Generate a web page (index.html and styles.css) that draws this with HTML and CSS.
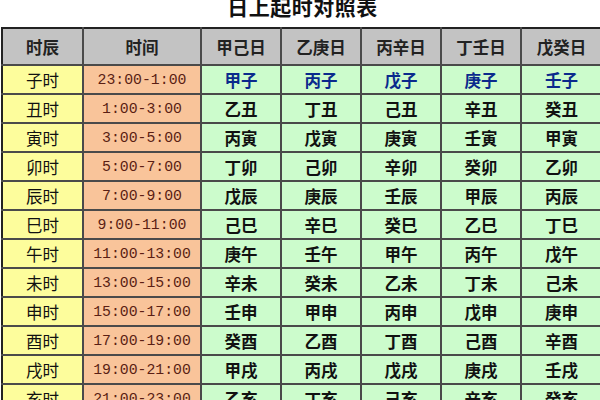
FILE: index.html
```html
<!DOCTYPE html>
<html>
<head>
<meta charset="utf-8">
<link rel="stylesheet" href="styles.css">
</head>
<body>
<div class="page">
  <div class="title">日上起时对照表</div>
  <table class="chart">
    <colgroup>
      <col class="c1"><col class="c2"><col class="c3"><col class="c3"><col class="c3"><col class="c3"><col class="c7">
    </colgroup>
    <thead>
      <tr><th>时辰</th><th>时间</th><th>甲己日</th><th>乙庚日</th><th>丙辛日</th><th>丁壬日</th><th>戊癸日</th></tr>
    </thead>
    <tbody>
      <tr class="first"><td class="hr">子时</td><td class="tm">23:00-1:00</td><td>甲子</td><td>丙子</td><td>戊子</td><td>庚子</td><td>壬子</td></tr>
      <tr><td class="hr">丑时</td><td class="tm">1:00-3:00</td><td>乙丑</td><td>丁丑</td><td>己丑</td><td>辛丑</td><td>癸丑</td></tr>
      <tr><td class="hr">寅时</td><td class="tm">3:00-5:00</td><td>丙寅</td><td>戊寅</td><td>庚寅</td><td>壬寅</td><td>甲寅</td></tr>
      <tr><td class="hr">卯时</td><td class="tm">5:00-7:00</td><td>丁卯</td><td>己卯</td><td>辛卯</td><td>癸卯</td><td>乙卯</td></tr>
      <tr><td class="hr">辰时</td><td class="tm">7:00-9:00</td><td>戊辰</td><td>庚辰</td><td>壬辰</td><td>甲辰</td><td>丙辰</td></tr>
      <tr><td class="hr">巳时</td><td class="tm">9:00-11:00</td><td>己巳</td><td>辛巳</td><td>癸巳</td><td>乙巳</td><td>丁巳</td></tr>
      <tr><td class="hr">午时</td><td class="tm">11:00-13:00</td><td>庚午</td><td>壬午</td><td>甲午</td><td>丙午</td><td>戊午</td></tr>
      <tr><td class="hr">未时</td><td class="tm">13:00-15:00</td><td>辛未</td><td>癸未</td><td>乙未</td><td>丁未</td><td>己未</td></tr>
      <tr><td class="hr">申时</td><td class="tm">15:00-17:00</td><td>壬申</td><td>甲申</td><td>丙申</td><td>戊申</td><td>庚申</td></tr>
      <tr><td class="hr">酉时</td><td class="tm">17:00-19:00</td><td>癸酉</td><td>乙酉</td><td>丁酉</td><td>己酉</td><td>辛酉</td></tr>
      <tr><td class="hr">戌时</td><td class="tm">19:00-21:00</td><td>甲戌</td><td>丙戌</td><td>戊戌</td><td>庚戌</td><td>壬戌</td></tr>
      <tr><td class="hr">亥时</td><td class="tm">21:00-23:00</td><td>乙亥</td><td>丁亥</td><td>己亥</td><td>辛亥</td><td>癸亥</td></tr>
    </tbody>
  </table>
</div>
</body>
</html>
```
FILE: styles.css
```css
html, body {
  margin: 0;
  padding: 0;
  background: #ffffff;
  overflow: hidden;
}
.page {
  width: 600px;
  height: 400px;
  overflow: hidden;
  padding-left: 1px;
  box-sizing: border-box;
  font-family: "Noto Sans CJK SC", "DejaVu Sans", sans-serif;
}
.title {
  height: 27px;
  line-height: 12px;
  text-align: center;
  font-size: 21px;
  font-weight: 700;
  color: #111;
  padding-left: 4px;
  letter-spacing: 0.5px;
}
.chart {
  border-collapse: collapse;
  table-layout: fixed;
  width: 600px;
}
.c1 { width: 81px; }
.c2 { width: 118px; }
.c3 { width: 80px; }
.c7 { width: 81px; }
.chart th, .chart td {
  border: 2px solid #4a4a4a;
  text-align: center;
  padding: 0;
  white-space: nowrap;
  overflow: hidden;
}
.chart th {
  height: 35px;
  background: #c3c3c3;
  font-size: 16.5px;
  font-weight: 700;
  color: #222;
  border-top-color: #222;
}
.chart td {
  height: 27px;
  background: #ccfccc;
  font-size: 16.5px;
  font-weight: 700;
  color: #111;
}
.chart td.hr {
  background: #fdfd9c;
  font-weight: 400;
  color: #111;
}
.chart td.tm {
  background: #f9c49a;
  font-family: "Liberation Mono", monospace;
  font-size: 14.8px;
  font-weight: 400;
  color: #5a1e14;
}
.chart tr.first td {
  color: #0a2a8c;
}
.chart tr.first td.hr {
  color: #111;
}
.chart tr.first td.tm {
  color: #5a1e14;
}
.chart th:first-child, .chart td:first-child {
  border-left-color: #222;
}
```
